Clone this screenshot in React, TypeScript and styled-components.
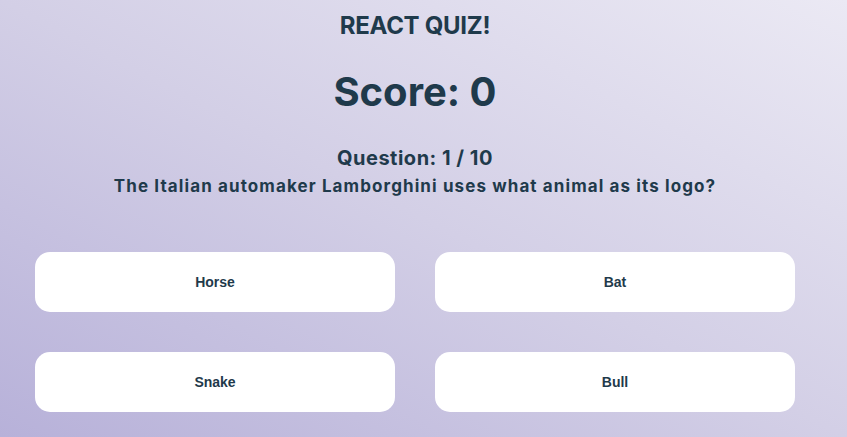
import React from "react";
import styled, { createGlobalStyle } from "styled-components";

const GlobalStyle = createGlobalStyle`
  html, body { margin: 0; padding: 0; }
  body {
    min-height: 100vh;
    background: linear-gradient(to top right, #b7b1d9 0%, #d3cfe6 50%, #ebe9f4 100%);
    background-attachment: fixed;
    font-family: "Inter", "Liberation Sans", sans-serif;
    color: #1f3a4b;
  }
`;

const Page = styled.div`
  width: 830px;
  display: flex;
  flex-direction: column;
  align-items: center;
  padding-top: 12px;
`;

const Title = styled.h2`
  margin: 0;
  font-size: 24px;
  line-height: 28px;
  font-weight: 700;
  letter-spacing: -0.3px;
`;

const Score = styled.h1`
  margin: 28px 0 0;
  font-size: 40px;
  line-height: 48px;
  font-weight: 700;
`;

const QuestionNumber = styled.h3`
  margin: 29px 0 0;
  font-size: 20px;
  line-height: 26px;
  font-weight: 700;
  letter-spacing: 0.5px;
`;

const QuestionText = styled.p`
  margin: 3px 0 0;
  font-size: 17px;
  line-height: 24px;
  font-weight: 700;
  letter-spacing: 1.1px;
`;

const Answers = styled.div`
  margin-top: 54px;
  display: grid;
  grid-template-columns: 360px 360px;
  column-gap: 40px;
  row-gap: 40px;
`;

const AnswerButton = styled.button`
  height: 60px;
  border: none;
  border-radius: 15px;
  background: #ffffff;
  font-family: "Liberation Sans", Arial, sans-serif;
  font-size: 14px;
  font-weight: 700;
  color: #1f3a4b;
  cursor: pointer;
`;

const answers = ["Horse", "Bat", "Snake", "Bull"];

export default function App() {
  return (
    <>
      <GlobalStyle />
      <Page>
        <Title>REACT QUIZ!</Title>
        <Score>Score: 0</Score>
        <QuestionNumber>Question: 1 / 10</QuestionNumber>
        <QuestionText>The Italian automaker Lamborghini uses what animal as its logo?</QuestionText>
        <Answers>
          {answers.map((a) => (
            <AnswerButton key={a}>{a}</AnswerButton>
          ))}
        </Answers>
      </Page>
    </>
  );
}
